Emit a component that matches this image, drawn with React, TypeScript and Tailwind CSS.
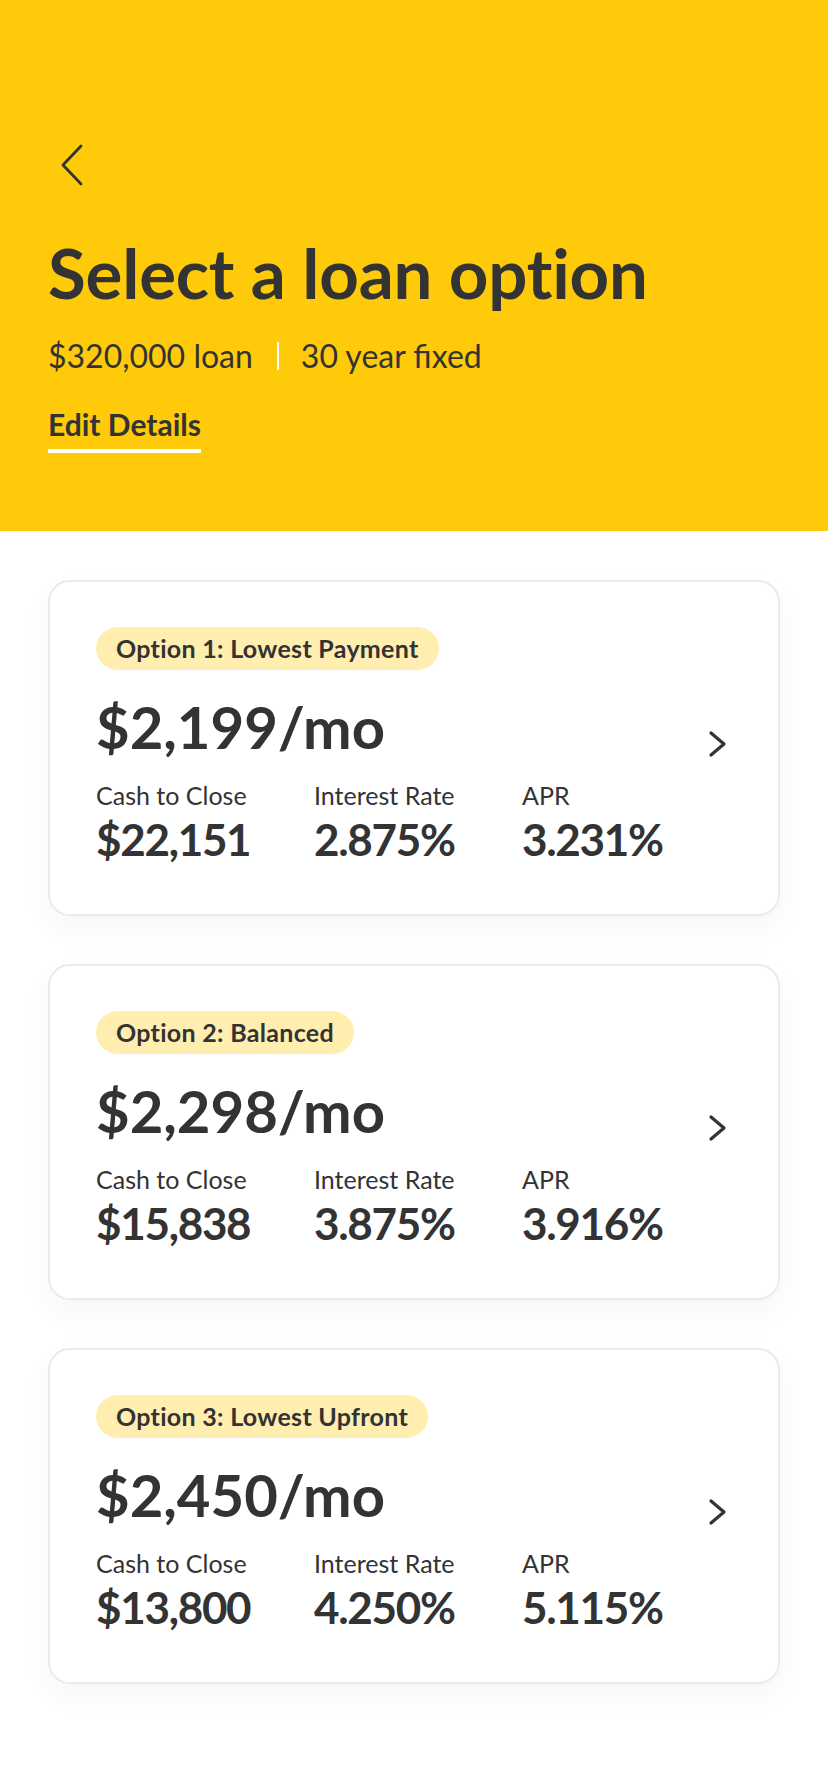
import React from 'react';

interface LoanOption {
  label: string;
  monthly: string;
  cashToClose: string;
  rate: string;
  apr: string;
}

const OPTIONS: LoanOption[] = [
  { label: 'Option 1: Lowest Payment', monthly: '$2,199/mo', cashToClose: '$22,151', rate: '2.875%', apr: '3.231%' },
  { label: 'Option 2: Balanced', monthly: '$2,298/mo', cashToClose: '$15,838', rate: '3.875%', apr: '3.916%' },
  { label: 'Option 3: Lowest Upfront', monthly: '$2,450/mo', cashToClose: '$13,800', rate: '4.250%', apr: '5.115%' },
];

const Stat = ({ label, value, width }: { label: string; value: string; width: string }) => (
  <div className={width}>
    <div className="text-[25px] leading-none">{label}</div>
    <div className="mt-[9px] text-[44px] leading-none font-bold tracking-[-1.3px]">{value}</div>
  </div>
);

const OptionCard = ({ option }: { option: LoanOption }) => (
  <div className="flex items-center rounded-[22px] border-2 border-[#ebebeb] bg-white pl-[46px] pr-[50px] pt-[45px] pb-[53px] shadow-[0_12px_30px_rgba(0,0,0,0.04)]">
    <div className="flex-1">
      <span className="inline-flex h-[43px] items-center rounded-full bg-[#ffeeb0] px-[20px] text-[25px] font-bold tracking-[0.3px]">
        {option.label}
      </span>
      <div className="mt-[28px] text-[58px] leading-none font-bold">{option.monthly}</div>
      <div className="mt-[27px] flex">
        <Stat label="Cash to Close" value={option.cashToClose} width="w-[218px]" />
        <Stat label="Interest Rate" value={option.rate} width="w-[208px]" />
        <Stat label="APR" value={option.apr} width="w-[150px]" />
      </div>
    </div>
    <svg width="22" height="32" viewBox="0 0 22 32" fill="none" stroke="#333333" strokeWidth="3.2" strokeLinecap="round" strokeLinejoin="round">
      <polyline points="5,5 18,16 5,27" />
    </svg>
  </div>
);

export default function App() {
  return (
    <div className="min-h-[1792px] bg-white text-[#333333] font-['Lato','Noto_Sans',sans-serif]">
      <div className="h-[531px] bg-[#ffca0a] pl-12 pt-[144px]">
        <svg className="ml-[12px]" width="24" height="42" viewBox="0 0 24 42" fill="none" stroke="#333333" strokeWidth="2.8" strokeLinecap="round" strokeLinejoin="round">
          <polyline points="21,2 3,21 21,40" />
        </svg>
        <h1 className="mt-[52px] text-[69px] leading-none font-bold tracking-[-0.2px]">Select a loan option</h1>
        <div className="mt-[33px] flex items-center text-[32px] leading-none">
          <span>$320,000 loan</span>
          <span className="ml-[24px] mr-[22px] h-[28px] w-[2px] bg-white" />
          <span>30 year fixed</span>
        </div>
        <div className="mt-[37px]">
          <span className="inline-block border-b-4 border-white pb-[10px] text-[30px] leading-none font-bold">Edit Details</span>
        </div>
      </div>
      <div className="mx-12 mt-[49px] flex flex-col gap-[48px]">
        {OPTIONS.map((o) => (
          <OptionCard key={o.label} option={o} />
        ))}
      </div>
    </div>
  );
}
